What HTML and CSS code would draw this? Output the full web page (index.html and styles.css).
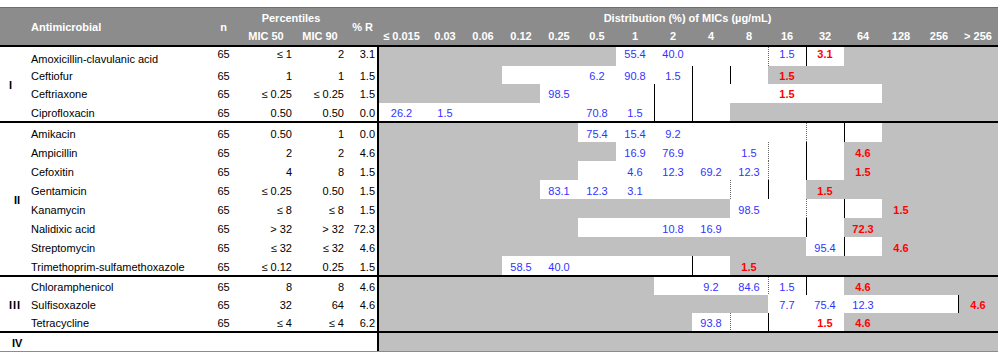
FILE: index.html
```html
<!DOCTYPE html>
<html lang="en">
<head>
    <meta charset="UTF-8">
    <title>MIC distribution</title>
    <link rel="stylesheet" href="styles.css">
</head>
<body>
    <div class="sheet">
        <div class="head">
            <div class="h-name">Antimicrobial</div>
            <div class="h-n">n</div>
            <div class="h-pct">Percentiles</div>
            <div class="h-r">% R</div>
            <div class="h-dist">Distribution (%) of MICs (µg/mL)</div>
            <div>MIC 50</div>
            <div>MIC 90</div>
            <div>≤ 0.015</div>
            <div>0.03</div>
            <div>0.06</div>
            <div>0.12</div>
            <div>0.25</div>
            <div>0.5</div>
            <div>1</div>
            <div>2</div>
            <div>4</div>
            <div>8</div>
            <div>16</div>
            <div>32</div>
            <div>64</div>
            <div>128</div>
            <div>256</div>
            <div>&gt; 256</div>
        </div>
        <div id="body"></div>
    </div>

    <script>
        // columns: 0 = ≤0.015 ... 15 = >256
        // range = white (tested) columns, vals = blue, res = red, dot = dotted line, bp = solid line
        var groups = [
            { label: 'I', cls: 'g1', rows: [
                { name: 'Amoxicillin-clavulanic acid', p50: '≤ 1', p90: '2', r: '3.1', range: [6, 11],
                  vals: {6: '55.4', 7: '40.0', 10: '1.5'}, res: {11: '3.1'}, dot: [10], bp: [11], top: true },
                { name: 'Ceftiofur', p50: '1', p90: '1', r: '1.5', range: [3, 9],
                  vals: {5: '6.2', 6: '90.8', 7: '1.5'}, res: {10: '1.5'}, dot: [], bp: [8, 9] },
                { name: 'Ceftriaxone', p50: '≤ 0.25', p90: '≤ 0.25', r: '1.5', range: [4, 12],
                  vals: {4: '98.5'}, res: {10: '1.5'}, dot: [], bp: [7, 8] },
                { name: 'Ciprofloxacin', p50: '0.50', p90: '0.50', r: '0.0', range: [0, 8],
                  vals: {0: '26.2', 1: '1.5', 5: '70.8', 6: '1.5'}, res: {}, dot: [], bp: [7, 8] }
            ]},
            { label: 'II', cls: 'g2', rows: [
                { name: 'Amikacin', p50: '0.50', p90: '1', r: '0.0', range: [5, 12],
                  vals: {5: '75.4', 6: '15.4', 7: '9.2'}, res: {}, dot: [11], bp: [12] },
                { name: 'Ampicillin', p50: '2', p90: '2', r: '4.6', range: [6, 11],
                  vals: {6: '16.9', 7: '76.9', 9: '1.5'}, res: {12: '4.6'}, dot: [10], bp: [11] },
                { name: 'Cefoxitin', p50: '4', p90: '8', r: '1.5', range: [5, 11],
                  vals: {6: '4.6', 7: '12.3', 8: '69.2', 9: '12.3'}, res: {12: '1.5'}, dot: [10], bp: [11] },
                { name: 'Gentamicin', p50: '≤ 0.25', p90: '0.50', r: '1.5', range: [4, 10],
                  vals: {4: '83.1', 5: '12.3', 6: '3.1'}, res: {11: '1.5'}, dot: [9], bp: [10] },
                { name: 'Kanamycin', p50: '≤ 8', p90: '≤ 8', r: '1.5', range: [9, 12],
                  vals: {9: '98.5'}, res: {13: '1.5'}, dot: [11], bp: [12] },
                { name: 'Nalidixic acid', p50: '&gt; 32', p90: '&gt; 32', r: '72.3', range: [5, 11],
                  vals: {7: '10.8', 8: '16.9'}, res: {12: '72.3'}, dot: [], bp: [11] },
                { name: 'Streptomycin', p50: '≤ 32', p90: '≤ 32', r: '4.6', range: [11, 12],
                  vals: {11: '95.4'}, res: {13: '4.6'}, dot: [], bp: [12] },
                { name: 'Trimethoprim-sulfamethoxazole', p50: '≤ 0.12', p90: '0.25', r: '1.5', range: [3, 8],
                  vals: {3: '58.5', 4: '40.0'}, res: {9: '1.5'}, dot: [], bp: [8] }
            ]},
            { label: 'III', cls: 'g3', rows: [
                { name: 'Chloramphenicol', p50: '8', p90: '8', r: '4.6', range: [7, 11],
                  vals: {8: '9.2', 9: '84.6', 10: '1.5'}, res: {12: '4.6'}, dot: [10], bp: [11] },
                { name: 'Sulfisoxazole', p50: '32', p90: '64', r: '4.6', range: [10, 14],
                  vals: {10: '7.7', 11: '75.4', 12: '12.3'}, res: {15: '4.6'}, dot: [], bp: [15] },
                { name: 'Tetracycline', p50: '≤ 4', p90: '≤ 4', r: '6.2', range: [8, 11],
                  vals: {8: '93.8'}, res: {11: '1.5', 12: '4.6'}, dot: [9], bp: [10] }
            ]},
            { label: 'IV', cls: 'g4', rows: [
                { name: '', n: '', p50: '', p90: '', r: '', range: [-1, -1],
                  vals: {}, res: {}, dot: [], bp: [] }
            ]}
        ];

        function buildRow(d) {
            var n = d.n === undefined ? '65' : d.n;
            var html = '<div class="row' + (d.top ? ' top' : '') + '">' +
                '<div class="cell name">' + d.name + '</div>' +
                '<div class="cell n num">' + n + '</div>' +
                '<div class="cell p50 num">' + d.p50 + '</div>' +
                '<div class="cell p90 num">' + d.p90 + '</div>' +
                '<div class="cell pr num">' + d.r + '</div>';

            for (var i = 0; i < 16; i++) {
                var cls = 'cell mic num';
                if (i == 0) cls += ' first';
                if (i >= d.range[0] && i <= d.range[1]) cls += ' tested';
                if (d.dot.indexOf(i) > -1) cls += ' dot';
                if (d.bp.indexOf(i) > -1) cls += ' bp';

                var txt = '';
                if (d.vals[i]) txt = '<span class="v">' + d.vals[i] + '</span>';
                if (d.res[i]) txt = '<span class="v res">' + d.res[i] + '</span>';
                html += '<div class="' + cls + '">' + txt + '</div>';
            }
            return html + '</div>';
        }

        document.addEventListener("DOMContentLoaded", function() {
            var body = document.getElementById('body');
            var html = '';
            groups.forEach(function(g) {
                html += '<div class="group ' + g.cls + '">';
                html += '<div class="cell roman" style="grid-row: span ' + g.rows.length + '">' + g.label + '</div>';
                g.rows.forEach(function(d) {
                    html += buildRow(d);
                });
                html += '</div>';
            });
            body.innerHTML = html;
        });
    </script>
</body>
</html>
```

FILE: styles.css
```css
body {
    margin: 0;
    padding: 0;
    font-family: "Liberation Sans", Arial, sans-serif;
    font-size: 11px;
    color: #000;
    background-color: #fff;
}

.sheet {
    width: 998px;
    padding-top: 7px;
}

.head,
.group {
    display: grid;
    grid-template-columns: 28px 182px 27px 58px 50px 32px 49px repeat(14, 38px) 40px;
}

/* header */
.head {
    grid-template-rows: 19px 18px;
    background-color: #8c8c8c;
    color: #fff;
    font-weight: bold;
    border-top: 1px solid #6e6e6e;
    border-bottom: 2px solid #000;
}

.head div {
    display: flex;
    align-items: center;
    justify-content: center;
    white-space: nowrap;
}

.head .h-name {
    grid-column: 1 / 3;
    grid-row: 1 / 3;
    justify-content: flex-start;
    padding-left: 31px;
}

.head .h-n {
    grid-column: 3;
    grid-row: 1 / 3;
}

.head .h-pct {
    grid-column: 4 / 6;
    grid-row: 1;
}

.head .h-r {
    grid-column: 6;
    grid-row: 1 / 3;
    justify-content: flex-end;
    padding-right: 4px;
}

.head .h-dist {
    grid-column: 7 / -1;
    grid-row: 1;
}

/* body groups */
.group {
    border-top: 2px solid #000;
}

.g1 {
    grid-auto-rows: 18.5px;
    border-top: 0;
}

.g2 {
    grid-auto-rows: 19px;
}

.g3 {
    grid-auto-rows: 18px;
}

.g4 {
    grid-auto-rows: 18px;
    border-bottom: 1px solid #8c8c8c;
}

.row {
    display: contents;
}

.cell {
    display: flex;
    align-items: center;
    padding-top: 2px;
    white-space: nowrap;
}

.roman {
    grid-column: 1;
    font-weight: bold;
    padding-left: 9px;
}

.g2 .roman {
    padding-left: 14px;
}

.g3 .roman {
    padding-left: 9px;
    letter-spacing: 1px;
}

.g4 .roman {
    padding-left: 12px;
}

.name {
    padding-left: 3px;
}

.n {
    justify-content: center;
}

.p50 {
    justify-content: flex-end;
    padding-right: 3px;
}

.p90 {
    justify-content: flex-end;
    padding-right: 1px;
}

.pr {
    justify-content: flex-end;
    padding-right: 2px;
}

/* first row: numbers sit higher than the name */
.top .num {
    padding-top: 0;
    padding-bottom: 4px;
}

.top .name {
    padding-top: 6px;
}

.mic {
    justify-content: center;
    background-color: #c0c0c0;
}

.mic.tested {
    background-color: #fff;
}

.mic.first {
    box-shadow: inset 2px 0 0 #000;
}

.mic.bp {
    box-shadow: inset 1px 0 0 #000;
}

.mic.dot {
    background-image: linear-gradient(#666 50%, transparent 50%);
    background-size: 1px 2px;
    background-repeat: repeat-y;
}

.v {
    color: #3333ff;
}

.v.res {
    color: #f00;
    font-weight: bold;
}
```
